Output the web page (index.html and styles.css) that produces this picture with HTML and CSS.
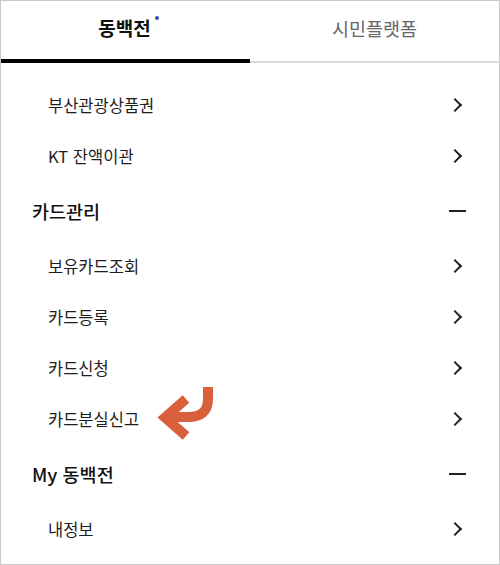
FILE: index.html
```html
<!DOCTYPE html>
<html lang="ko">
<head>
    <meta charset="UTF-8">
    <meta name="viewport" content="width=device-width, initial-scale=1.0">
    <title>동백전 메뉴</title>
    <link rel="stylesheet" href="styles.css">
</head>
<body>
    <div class="page">
        <nav class="tabs">
            <a href="#" class="tab tab-active">동백전<span class="dot"></span></a>
            <a href="#" class="tab">시민플랫폼</a>
        </nav>
        <div class="menu">
            <a href="#" class="item">부산관광상품권<span class="chevron"></span></a>
            <a href="#" class="item">KT 잔액이관<span class="chevron"></span></a>

            <div class="section">카드관리<span class="minus"></span></div>
            <a href="#" class="item">보유카드조회<span class="chevron"></span></a>
            <a href="#" class="item">카드등록<span class="chevron"></span></a>
            <a href="#" class="item">카드신청<span class="chevron"></span></a>
            <a href="#" class="item item-marked">카드분실신고<span class="chevron"></span>
                <!-- 안내용 화살표 -->
                <svg class="pointer" width="64" height="60" viewBox="0 0 64 60">
                    <path d="M53 2 V14 Q53 32 33 32 H14" fill="none" stroke="#d9603d" stroke-width="10"/>
                    <path d="M31 14 L10 32.5 L31 51" fill="none" stroke="#d9603d" stroke-width="10" stroke-linejoin="miter"/>
                </svg>
            </a>

            <div class="section">My 동백전<span class="minus"></span></div>
            <a href="#" class="item">내정보<span class="chevron"></span></a>
        </div>
    </div>
</body>
</html>
```

FILE: styles.css
```css
body {
    margin: 0;
    padding: 0;
    background-color: #ffffff;
    font-family: "Noto Sans CJK KR", "Noto Sans", sans-serif;
}

.page {
    width: 500px;
    height: 565px;
    box-sizing: border-box;
    border: 1px solid #c8c8c8;
    overflow: hidden;
}

/* 상단 탭 */
.tabs {
    display: flex;
    height: 62px;
}

.tab {
    flex: 0 0 50%;
    display: flex;
    justify-content: center;
    align-items: center;
    padding-bottom: 7px;
    box-sizing: border-box;
    border-bottom: 2px solid #d9d9d9;
    color: #666666;
    font-size: 18.5px;
    text-decoration: none;
}

.tab-active {
    border-bottom: 4px solid #000000;
    padding-bottom: 5px;
    padding-left: 6px;
    color: #111111;
    font-size: 19px;
    font-weight: 700;
}

.dot {
    width: 4px;
    height: 4px;
    border-radius: 50%;
    background-color: #3b4fae;
    margin-left: 4px;
    align-self: flex-start;
    margin-top: 15px;
}

/* 메뉴 목록 */
.menu {
    display: flex;
    flex-direction: column;
    padding-top: 16px;
}

.item,
.section {
    display: flex;
    justify-content: space-between;
    align-items: center;
    color: #1e1e1e;
    text-decoration: none;
}

.item {
    height: 51px;
    padding: 0 36px 0 47px;
    font-size: 16.5px;
}

.item-marked {
    position: relative;
}

.section {
    height: 59px;
    padding: 0 33px 0 31px;
    font-size: 18.5px;
    font-weight: 500;
    color: #111111;
}

.chevron {
    width: 8px;
    height: 8px;
    border-top: 2px solid #222222;
    border-right: 2px solid #222222;
    transform: rotate(45deg);
    margin-right: 3px;
}

.minus {
    width: 17px;
    height: 2px;
    background-color: #222222;
}

.pointer {
    position: absolute;
    left: 154px;
    top: -8px;
}
```
